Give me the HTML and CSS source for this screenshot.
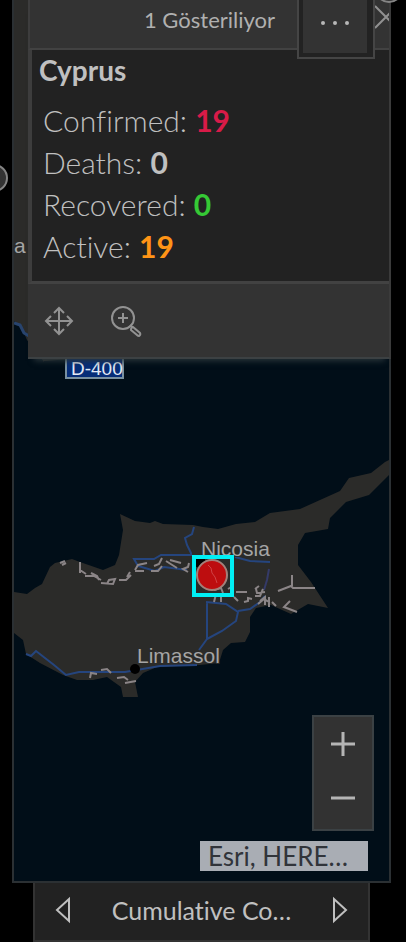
FILE: index.html
```html
<!DOCTYPE html>
<html lang="tr">
<head>
<meta charset="utf-8">
<meta name="viewport" content="width=device-width, initial-scale=1">
<title>Cyprus</title>
<link rel="stylesheet" href="styles.css">
</head>
<body>
<main class="map">
  <svg class="map-canvas" viewBox="14 0 375 881" preserveAspectRatio="xMidYMin slice" role="img" aria-label="Cyprus">
    <path class="land" d="M14 0H389V300L140 362H44L27 340L22 329L14 321Z"/>
    <path class="water" d="M44 361L140 354H389V420H44Z"/>
    <path class="coast" d="M14 323L20 325L24 333L29 336"/>
    <path class="land" d="M14 592L27 594L35 588L42 584L50 567L55 563L72 559L80 562L103 570L115 565L119 555L123 530L120 514L135 521L150 523L155 521L163 524L193 525L203 527L218 529L236 524L255 522L270 513L300 509L320 500L340 491L349 478L371 473L385 462L389 460V475L369 495L346 502L330 518L328 529L305 533L298 545V565L311 582L328 608L308 604L291 614L271 605L256 608L250 617V632L245 642L231 643L223 650L219 663L200 665L157 667L143 673L135 682L138 697H123L121 687L107 677L93 680L77 680L63 675L40 663L26 654L23 640L14 633Z"/>
    <g class="roads">
      <path d="M26 654L31 656L36 651L54 665L66 675L79 672H125L160 666L197 665"/>
      <path d="M194 527L192 534L185 538L187 545L191 553V555H161L154 559H134L138 566L145 568L155 571L164 567L187 570"/>
      <path d="M207 603V639L199 650M207 639L222 631L236 621L238 612L226 604L206 602M238 611L250 609L260 602L265 596"/>
      <path d="M235 557L250 561L270 562"/>
      <path class="road-minor" d="M269 569L267 580L264 590"/>
    </g>
    <g class="border-line">
      <path d="M60 563L65 561M62 565L66 563M80 562V573M80 570L86 574M85 576H94L101 580M91 573L97 576L99 580M101 583L113 584L115 579L109 580L107 584M119 580H126L131 575M127 577L130 572M135 570L138 565L147 563M135 571H144M154 566L159 564L162 558M151 571H158L162 566M166 561L177 568M170 560L181 563M189 563L188 567L183 569L188 572"/>
      <path d="M214 590L221 588L223 593M216 594L214 602M221 597V602M228 589L233 586M236 592H247M234 597L238 601M244 602L248 601V598L252 599M255 589L259 586M256 589L257 593L265 592M263 589L260 596L255 596M260 601L265 597V605M258 604L264 599L269 602M269 597V607M272 602L276 606M278 591L291 586L293 588H315M292 575V586M290 601L284 607L297 612"/>
      <path d="M90 678L91 673L97 674M101 670L107 669L111 673M117 678L124 677L128 680M125 683L136 681"/>
    </g>
    <rect class="city" x="194" y="557" width="11" height="10"/>
    <circle class="city" cx="135" cy="669" r="5"/>
    <text class="place" x="201" y="556">Nicosia</text>
    <text class="place" x="137" y="663">Limassol</text>
    <text class="place" x="14" y="253">a</text>
    <g class="shield">
      <rect x="66" y="358" width="57" height="20"/>
      <text x="71" y="375">D-400</text>
    </g>
    <circle class="case" cx="212" cy="575" r="15"/>
    <path class="case-line" d="M208 565L211 568L212 573L215 577L217 583"/>
    <rect class="selection" x="194" y="557" width="38" height="38"/>
  </svg>

  <article class="popup">
    <header class="popup-header">
      <span>1 Gösteriliyor</span>
      <button class="close" aria-label="Kapat">
        <svg width="24" height="24" viewBox="0 0 24 24"><path d="M1 1L23 23M23 1L1 23"/></svg>
      </button>
      <div class="menu">
        <button class="menu-button" aria-label="Menü">
          <svg width="32" height="6" viewBox="0 0 32 6"><circle cx="4" cy="3" r="2"/><circle cx="16" cy="3" r="2"/><circle cx="28" cy="3" r="2"/></svg>
        </button>
      </div>
    </header>
    <section class="popup-body">
      <h1>Cyprus</h1>
      <p>Confirmed: <b class="confirmed">19</b></p>
      <p>Deaths: <b>0</b></p>
      <p>Recovered: <b class="recovered">0</b></p>
      <p>Active: <b class="active">19</b></p>
    </section>
    <footer class="popup-tools">
      <button aria-label="Kaydır">
        <svg width="30" height="30" viewBox="0 0 30 30"><path d="M15 3V27M3 15H27M10 7L15 2L20 7M10 23L15 28L20 23M7 10L2 15L7 20M23 10L28 15L23 20"/></svg>
      </button>
      <button aria-label="Yakınlaştır">
        <svg width="32" height="32" viewBox="0 0 32 32"><circle cx="13" cy="13" r="11"/><path d="M13 8V18M8 13H18M20 20L23 23M23 22L30 28Q31 30 29 31Q28 31 27 30L21 25Q21 22 23 22Z"/></svg>
      </button>
    </footer>
  </article>

  <div class="map-controls">
    <div class="zoom">
      <button aria-label="Yakınlaştır"><svg width="26" height="26" viewBox="0 0 26 26"><path d="M13 1V25M1 13H25"/></svg></button>
      <button aria-label="Uzaklaştır"><svg width="26" height="26" viewBox="0 0 26 26"><path d="M1 13H25"/></svg></button>
    </div>
    <div class="attribution">Esri, HERE…</div>
  </div>
</main>
<nav class="tabs">
  <button aria-label="Önceki"><svg width="16" height="28" viewBox="0 0 16 28"><path d="M14 3V25L2 14Z"/></svg></button>
  <span>Cumulative Co…</span>
  <button aria-label="Sonraki"><svg width="16" height="28" viewBox="0 0 16 28"><path d="M2 3V25L14 14Z"/></svg></button>
</nav>
<span class="handle handle-left"></span>
<span class="handle handle-top"></span>
</body>
</html>
```
FILE: styles.css
```css
* {
  box-sizing: border-box;
}

body {
  position: relative;
  display: flex;
  flex-direction: column;
  min-height: 100vh;
  margin: 0;
  overflow-x: hidden;
  background: #000;
  color: #c0c0c0;
  font-family: Lato, "Open Sans", sans-serif;
  font-size: 24px;
  font-variant-ligatures: none;
}

button {
  display: flex;
  align-items: center;
  justify-content: center;
  padding: 0;
  border: 0;
  background: none;
  color: inherit;
}

button svg {
  flex: none;
  fill: none;
  stroke: currentColor;
  stroke-width: 2;
}

.map {
  position: relative;
  display: flex;
  flex: 1;
  flex-direction: column;
  justify-content: space-between;
  margin: 0 15px 0 12px;
  border: 2px solid #2b3033;
  border-top: 0;
  background: #010e18;
}

.map-canvas {
  position: absolute;
  inset: 0;
  width: 100%;
  height: 100%;
}

.land {
  fill: #2b2b29;
}

.water {
  fill: #010e18;
}

.coast,
.roads {
  fill: none;
  stroke: #25457e;
  stroke-width: 2;
}

.road-minor {
  stroke: #343a68;
}

.coast {
  stroke: #28446e;
  stroke-width: 3;
}

.border-line {
  fill: none;
  stroke: #8b8587;
  stroke-width: 2;
}

.city {
  fill: #000;
}

.place {
  fill: #a5a5a5;
  stroke: #2b2b29;
  stroke-width: 2;
  paint-order: stroke;
  font-family: "Liberation Sans", sans-serif;
  font-size: 21px;
}

.shield rect {
  fill: #062d78;
  stroke: #7890a0;
  stroke-width: 2;
}

.shield text {
  fill: #e2e9f5;
  font-family: "Liberation Sans", sans-serif;
  font-size: 19px;
}

.case {
  fill: #bd0d0f;
  stroke: #a3817b;
  stroke-width: 2;
}

.case-line {
  fill: none;
  stroke: #cf4245;
}

.selection {
  fill: none;
  stroke: #00f0f5;
  stroke-width: 4;
}

.popup {
  position: relative;
  margin: 0 -2px 0 14px;
  border-right: 2px solid #3b3b3b;
  border-bottom: 2px solid #3c4143;
  background: #333;
  box-shadow: 0 8px 6px -6px #29353a;
}

.popup-header {
  position: relative;
  display: flex;
  align-items: center;
  justify-content: center;
  height: 50px;
  padding-bottom: 10px;
  border-bottom: 2px solid #424242;
  border-left: 2px solid #3d3d3d;
  color: #b0b0b0;
  font-size: 22px;
}

.close {
  position: absolute;
  top: 5px;
  right: 0;
  justify-content: flex-start;
  width: 15px;
  overflow: hidden;
  color: #919191;
}

.menu {
  position: absolute;
  top: 0;
  right: 14px;
  width: 78px;
  height: 59px;
  padding: 0 6px 4px 4px;
  border: 2px solid #454545;
  border-top: 0;
  background: #222;
}

.menu-button {
  width: 100%;
  height: 53px;
  background: #333;
  color: #b8b8b8;
}

.menu-button svg {
  margin-bottom: 8px;
  fill: currentColor;
  stroke: none;
}

.popup-body {
  padding: 0 7px 14px;
  border-bottom: 3px solid #424242;
  border-left: 4px solid #3d3d3d;
  background: #222;
}

h1 {
  margin: 0 0 8px;
  font-size: 28px;
  font-weight: 700;
  line-height: 41px;
}

.popup-body p {
  margin: 0;
  padding-left: 4px;
  font-size: 30px;
  font-weight: 300;
  line-height: 42px;
}

.popup-body b {
  font-weight: 700;
}

.confirmed {
  color: #d81b48;
}

.recovered {
  color: #35c935;
}

.active {
  color: #ff9416;
}

.popup-tools {
  display: flex;
  align-items: center;
  gap: 36px;
  height: 73px;
  padding: 0 16px;
  color: #929292;
}

.map-controls {
  position: relative;
  display: flex;
  flex-direction: column;
  align-items: flex-end;
  gap: 10px;
  padding: 0 15px 10px;
}

.zoom {
  width: 62px;
  padding-bottom: 4px;
  border: 2px solid #3b4144;
  background: #323232;
  color: #b5b5b5;
}

.zoom button {
  width: 100%;
  height: 54px;
}

.zoom svg {
  stroke-width: 3;
}

.attribution {
  width: 168px;
  margin-right: 6px;
  padding: 0 8px;
  background: #a9adb4;
  color: #31343a;
  font-size: 26px;
  line-height: 30px;
  white-space: nowrap;
}

.tabs {
  display: flex;
  align-items: center;
  justify-content: space-between;
  height: 59px;
  margin: 0 36px 0 33px;
  padding: 0 20px 4px;
  border: 2px solid #333;
  border-top: 0;
  background: #222;
  font-size: 25px;
}

.handle {
  position: absolute;
  width: 28px;
  height: 28px;
  border: 2px solid #858585;
  border-radius: 50%;
  background: #333;
}

.handle-left {
  top: 164px;
  left: -20px;
}

.handle-top {
  top: -25px;
  right: 3px;
}
```
